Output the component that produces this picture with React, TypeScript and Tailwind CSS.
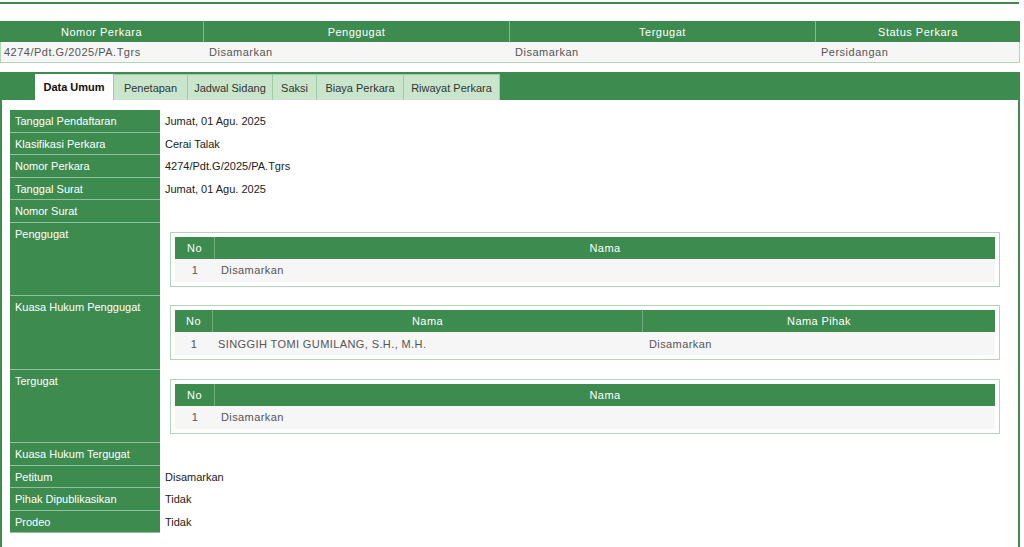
const GREEN = "bg-[#3d8b4f]";

const details: { label: string; value?: string; table?: "penggugat" | "kuasa" | "tergugat" }[] = [
  { label: "Tanggal Pendaftaran", value: "Jumat, 01 Agu. 2025" },
  { label: "Klasifikasi Perkara", value: "Cerai Talak" },
  { label: "Nomor Perkara", value: "4274/Pdt.G/2025/PA.Tgrs" },
  { label: "Tanggal Surat", value: "Jumat, 01 Agu. 2025" },
  { label: "Nomor Surat", value: "" },
  { label: "Penggugat", table: "penggugat" },
  { label: "Kuasa Hukum Penggugat", table: "kuasa" },
  { label: "Tergugat", table: "tergugat" },
  { label: "Kuasa Hukum Tergugat", value: "" },
  { label: "Petitum", value: "Disamarkan" },
  { label: "Pihak Dipublikasikan", value: "Tidak" },
  { label: "Prodeo", value: "Tidak" },
];

const tabs = [
  { name: "Data Umum", w: "w-[78px]" },
  { name: "Penetapan", w: "w-[74px]" },
  { name: "Jadwal Sidang", w: "w-[85px]" },
  { name: "Saksi", w: "w-[44px]" },
  { name: "Biaya Perkara", w: "w-[87px]" },
  { name: "Riwayat Perkara", w: "w-[97px]" },
];

function PartyTable({ kuasa }: { kuasa?: boolean }) {
  return (
    <div className="border border-[#b3d4b8] p-[4px]">
      <div className={`flex h-[22px] items-center text-white ${GREEN}`}>
        <div className={`flex h-full items-center justify-center border-r border-[#6fae7e] ${kuasa ? "w-[38px]" : "w-[40px]"}`}>No</div>
        {kuasa ? (
          <>
            <div className="flex h-full w-[430px] items-center justify-center border-r border-[#6fae7e]">Nama</div>
            <div className="flex h-full flex-1 items-center justify-center">Nama Pihak</div>
          </>
        ) : (
          <div className="flex h-full flex-1 items-center justify-center">Nama</div>
        )}
      </div>
      <div className="flex h-[23px] items-center bg-[#f6f6f6] text-[#555]">
        <div className={`text-center ${kuasa ? "w-[38px]" : "w-[40px]"}`}>1</div>
        {kuasa ? (
          <>
            <div className="w-[430px] pl-[5px]">SINGGIH TOMI GUMILANG, S.H., M.H.</div>
            <div className="flex-1 pl-[6px]">Disamarkan</div>
          </>
        ) : (
          <div className="flex-1 pl-[6px]">Disamarkan</div>
        )}
      </div>
    </div>
  );
}

export default function App() {
  return (
    <div className="w-[1020px] bg-white pt-[2px] text-[11px] leading-[14px] font-['Liberation_Sans',Arial,sans-serif]">
      <div className={`h-[2px] w-[1019px] ${GREEN}`} />

      {/* ringkasan perkara */}
      <div className="mt-[17px] tracking-[0.5px]">
        <div className={`flex h-[21px] items-center text-white ${GREEN}`}>
          <div className="flex h-full w-[204px] items-center justify-center border-r border-[#7fb98c]">Nomor Perkara</div>
          <div className="flex h-full w-[306px] items-center justify-center border-r border-[#7fb98c]">Penggugat</div>
          <div className="flex h-full w-[306px] items-center justify-center border-r border-[#7fb98c]">Tergugat</div>
          <div className="flex h-full flex-1 items-center justify-center">Status Perkara</div>
        </div>
        <div className="flex h-[21px] items-center border-x border-b border-[#b3d4b8] bg-[#f6f6f6] text-[#555]">
          <div className="w-[203px] pl-[3px]">4274/Pdt.G/2025/PA.Tgrs</div>
          <div className="w-[306px] pl-[5px]">Disamarkan</div>
          <div className="w-[306px] pl-[5px]">Disamarkan</div>
          <div className="flex-1 pl-[5px]">Persidangan</div>
        </div>
      </div>

      {/* panel detail */}
      <div className="mt-[9px]">
        <div className={`flex h-[28px] items-end pl-[35px] ${GREEN}`}>
          {tabs.map((t, i) =>
            i === 0 ? (
              <div key={t.name} className={`flex h-[26px] items-center justify-center bg-white font-bold text-[#111] ${t.w}`}>
                {t.name}
              </div>
            ) : (
              <div
                key={t.name}
                className={`flex h-[26px] items-center justify-center border-l border-t border-[#9fcba5] bg-[#c9e6cc] text-[#333] last:border-r ${t.w}`}
              >
                {t.name}
              </div>
            )
          )}
        </div>

        <div className="border-x-2 border-[#3d8b4f] pb-[14px] pl-[8px] pr-[18px] pt-[10px]">
          {details.map((d) => (
            <div key={d.label} className="flex">
              <div className={`w-[150px] shrink-0 border-b border-[#8fc29b] px-[5px] pt-[4px] text-white ${GREEN} ${d.table ? "h-[73.5px]" : "h-[22.5px]"}`}>
                {d.label}
              </div>
              {d.table ? (
                <div className="flex-1 pl-[10px] pt-[9px]">
                  <div className="tracking-[0.4px]">
                    <PartyTable kuasa={d.table === "kuasa"} />
                  </div>
                </div>
              ) : (
                <div className="flex-1 pl-[5px] pt-[4px] text-[#222]">{d.value}</div>
              )}
            </div>
          ))}
        </div>
      </div>
    </div>
  );
}
